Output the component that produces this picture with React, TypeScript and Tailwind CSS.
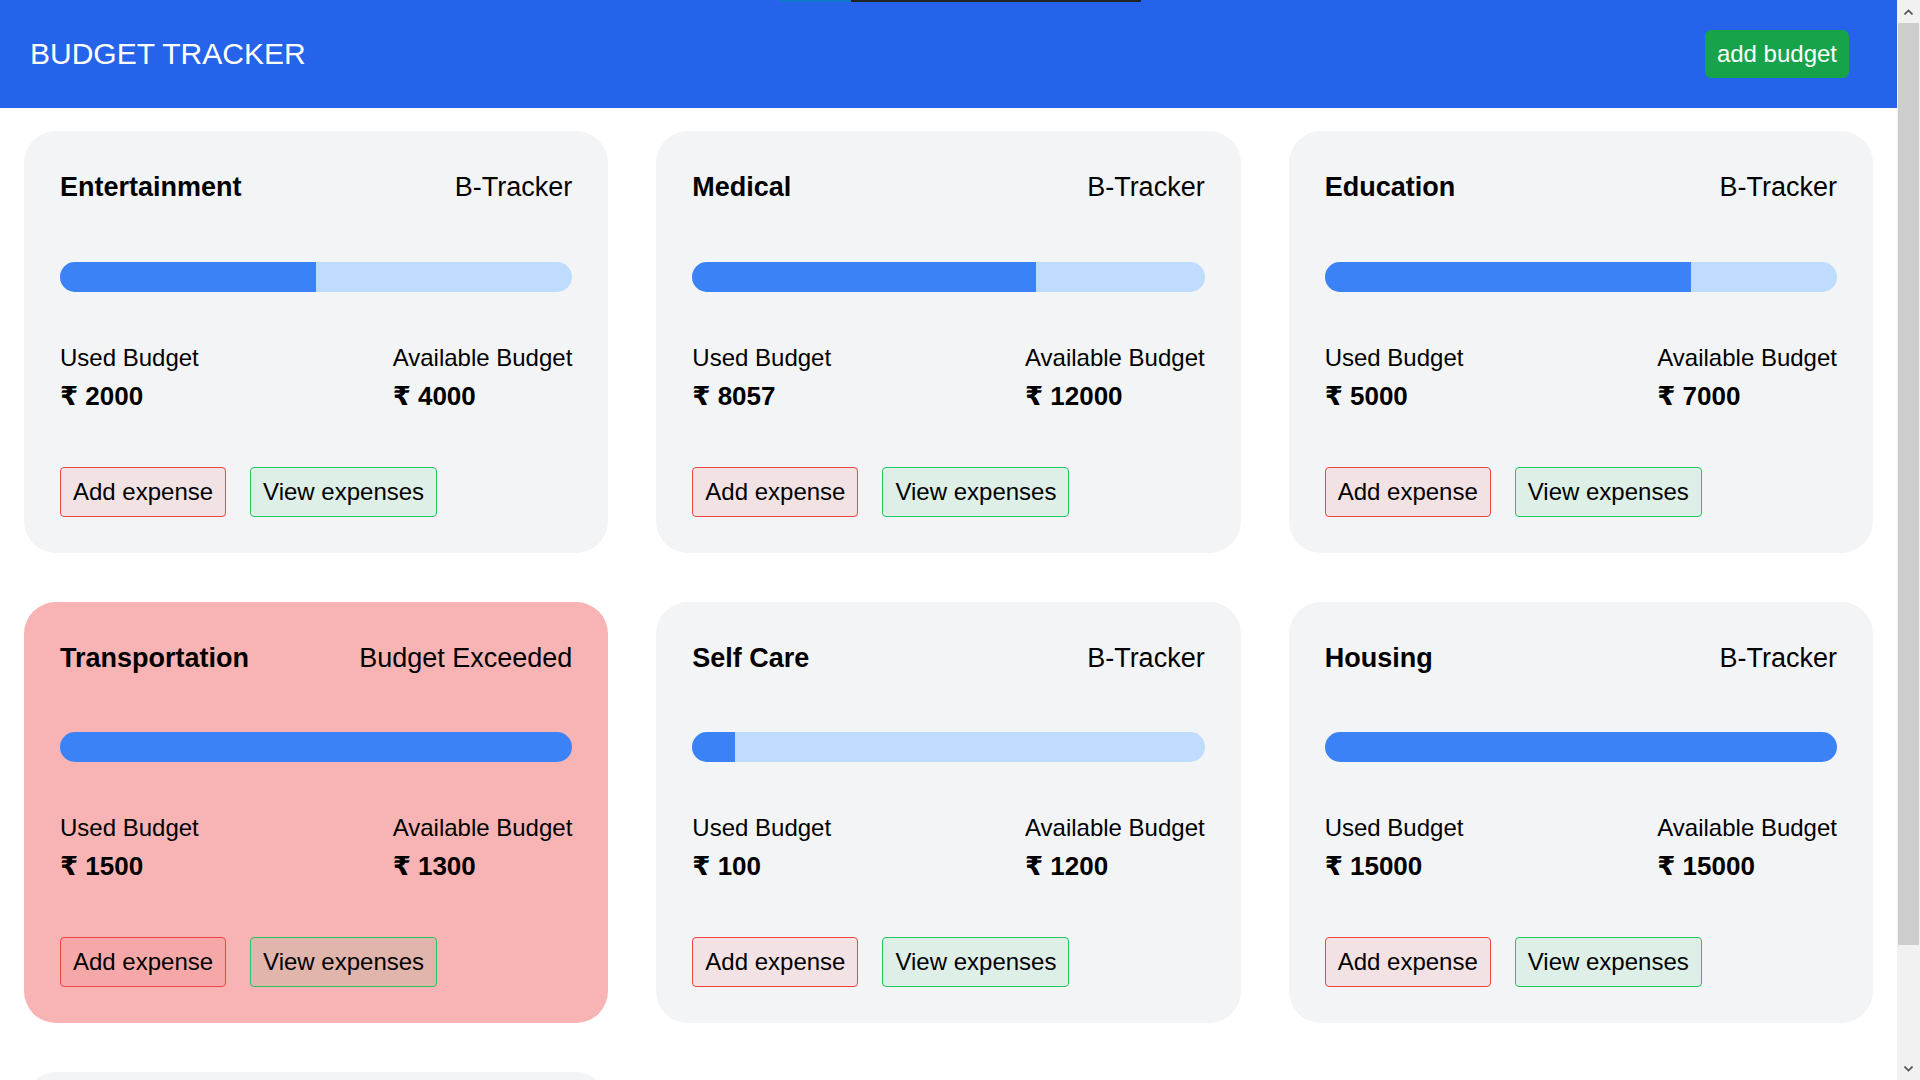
import React from "react"

interface Budget {
    name: string
    used: number
    total: number
}

const budgets: Budget[] = [
    { name: "Entertainment", used: 2000, total: 4000 },
    { name: "Medical", used: 8057, total: 12000 },
    { name: "Education", used: 5000, total: 7000 },
    { name: "Transportation", used: 1500, total: 1300 },
    { name: "Self Care", used: 100, total: 1200 },
    { name: "Housing", used: 15000, total: 15000 },
]

export default function App() {
    return (
        <div className="min-h-screen bg-white pr-[23px] text-black font-['Liberation_Sans',Arial,sans-serif]">
            {/* Header */}
            <header className="relative flex h-[108px] items-center justify-between bg-[#2563eb] pl-[30px] pr-12">
                <h1 className="text-3xl text-white">BUDGET TRACKER</h1>
                <button className="rounded-md bg-[#16a34a] px-3 py-2 text-2xl text-white">add budget</button>
                <div className="absolute left-[779px] top-0 h-[2px] w-[72px] bg-[#0b7ac8]" />
                <div className="absolute left-[851px] top-0 h-[2px] w-[290px] bg-[#222222]" />
            </header>

            {/* Cards */}
            <main className="grid grid-cols-3 gap-x-12 gap-y-[49px] px-6 pb-6 pt-[23px]">
                {budgets.map((b) => (
                    <BudgetCard key={b.name} budget={b} />
                ))}
                <div className="h-[112px] rounded-4xl bg-[#f3f4f6]" />
            </main>

            {/* Scrollbar */}
            <div className="fixed right-0 top-0 flex h-screen w-[23px] flex-col bg-[#f1f1f1]">
                <div className="flex h-[23px] items-center justify-center">
                    <svg width="9" height="6" viewBox="0 0 9 6"><path d="M0.5 5.5 L4.5 1.5 L8.5 5.5" stroke="#505050" strokeWidth="1.6" fill="none" /></svg>
                </div>
                <div className="mx-[1px] h-[922px] bg-[#cdcdcd]" />
                <div className="flex-1" />
                <div className="flex h-[23px] items-center justify-center">
                    <svg width="9" height="6" viewBox="0 0 9 6"><path d="M0.5 0.5 L4.5 4.5 L8.5 0.5" stroke="#505050" strokeWidth="1.6" fill="none" /></svg>
                </div>
            </div>
        </div>
    )
}

function Amount({ value }: { value: number }) {
    return (
        <p className="mt-[6px] text-[26px] leading-8 font-bold">
            <span className="font-['DejaVu_Sans',sans-serif]">₹</span> {value}
        </p>
    )
}

function BudgetCard({ budget }: { budget: Budget }) {
    const exceeded = budget.used > budget.total
    const percent = Math.min(100, (budget.used / budget.total) * 100)

    return (
        <div className={exceeded ? "rounded-4xl bg-[#f8b4b4] p-9" : "rounded-4xl bg-[#f3f4f6] p-9"}>
            <div className="flex items-center justify-between text-[27px] leading-[1.5]">
                <span className="font-bold">{budget.name}</span>
                <span>{exceeded ? "Budget Exceeded" : "B-Tracker"}</span>
            </div>

            <div className="mt-[54px] h-[30px] overflow-hidden rounded-full bg-[#bfdbfe]">
                <div className="h-full bg-[#3b82f6]" style={{ width: `${percent}%` }} />
            </div>

            <div className="mt-[50px] flex justify-between text-2xl">
                <div>
                    <p>Used Budget</p>
                    <Amount value={budget.used} />
                </div>
                <div>
                    <p>Available Budget</p>
                    <Amount value={budget.total} />
                </div>
            </div>

            <div className="mt-[55px] flex gap-6 text-2xl">
                <button className="rounded border border-[#ef4444] bg-[#ef4444]/10 px-3 py-2">Add expense</button>
                <button className="rounded border border-[#22c55e] bg-[#22c55e]/10 px-3 py-2">View expenses</button>
            </div>
        </div>
    )
}
